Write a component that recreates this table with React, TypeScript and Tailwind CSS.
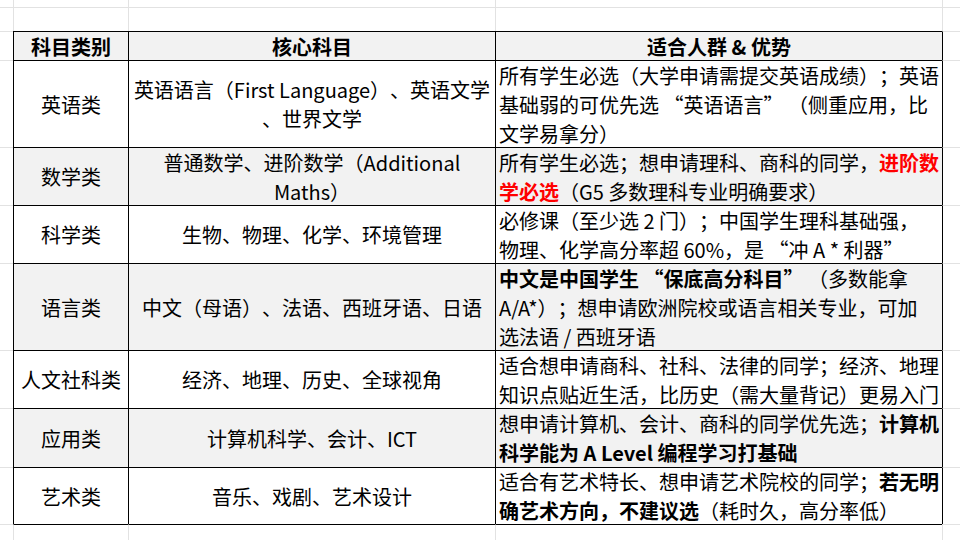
import React from "react";

const LIGHT = "#e2e2e2";
const DARK = "#000000";

const colW = [13, 115, 367, 447];
const rowH = [7, 24, 29, 87, 58, 58, 87, 58, 59, 57];

const B = ({ children }: { children: React.ReactNode }) => <span className="font-bold">{children}</span>;
const R = ({ children }: { children: React.ReactNode }) => <span className="font-bold text-[#ff0000]">{children}</span>;

type Row = { cat: React.ReactNode; core: React.ReactNode[]; desc: React.ReactNode[] };

const rows: Row[] = [
  {
    cat: "英语类",
    core: ["英语语言（First Language）、英语文学", "、世界文学"],
    desc: [
      "所有学生必选（大学申请需提交英语成绩）；英语",
      "基础弱的可优先选 “英语语言” （侧重应用，比",
      "文学易拿分）",
    ],
  },
  {
    cat: "数学类",
    core: ["普通数学、进阶数学（Additional", "Maths）"],
    desc: [
      <>所有学生必选；想申请理科、商科的同学，<R>进阶数</R></>,
      <><R>学必选</R>（G5 多数理科专业明确要求）</>,
    ],
  },
  {
    cat: "科学类",
    core: ["生物、物理、化学、环境管理"],
    desc: ["必修课（至少选 2 门）；中国学生理科基础强，", "物理、化学高分率超 60%，是 “冲 A * 利器”"],
  },
  {
    cat: "语言类",
    core: ["中文（母语）、法语、西班牙语、日语"],
    desc: [
      <><B>中文是中国学生 “保底高分科目”</B> （多数能拿</>,
      "A/A*）；想申请欧洲院校或语言相关专业，可加",
      "选法语 / 西班牙语",
    ],
  },
  {
    cat: "人文社科类",
    core: ["经济、地理、历史、全球视角"],
    desc: ["适合想申请商科、社科、法律的同学；经济、地理", "知识点贴近生活，比历史（需大量背记）更易入门"],
  },
  {
    cat: "应用类",
    core: ["计算机科学、会计、ICT"],
    desc: [
      <>想申请计算机、会计、商科的同学优先选；<B>计算机</B></>,
      <B>科学能为 A Level 编程学习打基础</B>,
    ],
  },
  {
    cat: "艺术类",
    core: ["音乐、戏剧、艺术设计"],
    desc: [
      <>适合有艺术特长、想申请艺术院校的同学；<B>若无明</B></>,
      <><B>确艺术方向，不建议选</B>（耗时久，高分率低）</>,
    ],
  },
];

function Lines({ lines }: { lines: React.ReactNode[] }) {
  return (
    <div>
      {lines.map((l, i) => (
        <div key={i} className="whitespace-nowrap">
          {l}
        </div>
      ))}
    </div>
  );
}

export default function App() {
  const cells: React.ReactNode[] = [];
  const nRows = rowH.length + 1;
  const nCols = colW.length + 1;
  for (let r = 0; r < nRows; r++) {
    for (let c = 0; c < nCols; c++) {
      const inTableL = c >= 1 && c <= 4 && r >= 2 && r <= 9;
      const inTableT = r >= 2 && r <= 10 && c >= 1 && c <= 3;
      const style: React.CSSProperties = {};
      if (c > 0) style.borderLeft = `1px solid ${inTableL ? DARK : LIGHT}`;
      if (r > 0) style.borderTop = `1px solid ${inTableT ? DARK : LIGHT}`;
      let content: React.ReactNode = null;
      let cls = "";
      const isTable = r >= 2 && r <= 9 && c >= 1 && c <= 3;
      if (isTable) {
        const grey = r === 2 || r % 2 === 0;
        cls = grey ? "bg-[#f2f2f2]" : "bg-white";
        if (r === 2) {
          const h = ["科目类别", "核心科目", "适合人群 & 优势"][c - 1];
          content = <div className="w-full text-center font-bold">{h}</div>;
        } else {
          const row = rows[r - 3];
          if (c === 1) content = <div className="w-full text-center">{row.cat}</div>;
          else if (c === 2)
            content = (
              <div className="w-full text-center">
                <Lines lines={row.core} />
              </div>
            );
          else
            content = (
              <div className="w-full pl-[3px]">
                <Lines lines={row.desc} />
              </div>
            );
        }
        cls += " flex items-center";
      }
      cells.push(
        <div key={`${r}-${c}`} className={cls} style={style}>
          {content}
        </div>
      );
    }
  }
  return (
    <div
      className="w-[960px] h-[540px] overflow-hidden bg-white text-black text-[20px] leading-[29px] [text-spacing-trim:space-all] grid grid-cols-[13px_115px_367px_447px_1fr] grid-rows-[7px_24px_29px_87px_58px_58px_87px_58px_59px_57px_1fr]"
      style={{ fontFamily: '"Noto Sans CJK SC", "Noto Sans", sans-serif' }}
    >
      {cells}
    </div>
  );
}
